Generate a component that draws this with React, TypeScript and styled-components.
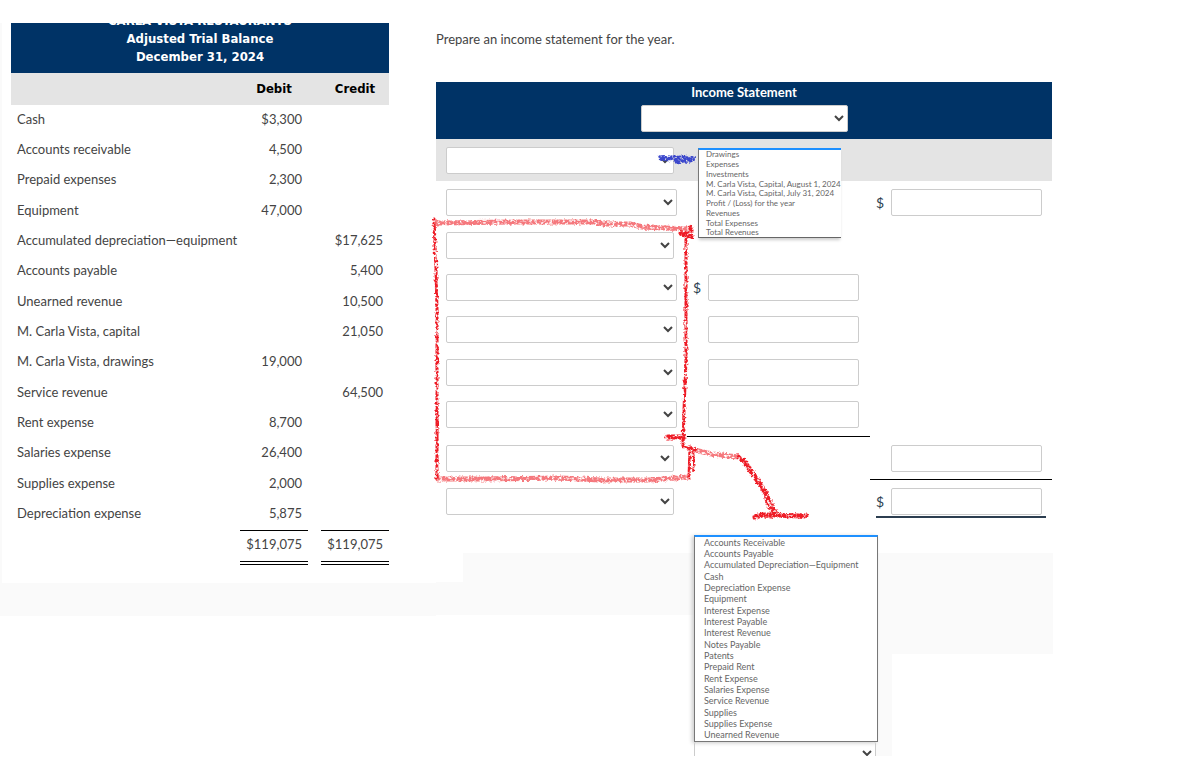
import React from 'react';
import styled, { createGlobalStyle } from 'styled-components';

const GlobalStyle = createGlobalStyle`
  *, *::before, *::after { box-sizing: border-box; }
  body {
    margin: 0;
    background: #fff;
    color: #444;
    font: 13px/18px Lato, "Liberation Sans", sans-serif;
  }
`;

const navy = '#003366';
const band = '#e4e4e4';
const wash = '#fafafa';

const Page = styled.main`
  display: flex;
  align-items: flex-start;
  padding: 23px 124px 10px 0;
`;

/* ---- Trial balance ---- */

const BalancePanel = styled.section`
  flex: 0 0 436px;
  padding: 0 0 33px 2px;
  background: ${wash};
`;

const BalanceSheet = styled.div`
  padding: 0 47px 18px 9px;
  background: #fff;
`;

const BalanceTitle = styled.header`
  display: flex;
  flex-direction: column;
  justify-content: flex-end;
  height: 50px;
  overflow: hidden;
  padding-bottom: 7px;
  background: ${navy};
  color: #fff;
  font: bold 13px/18px "DejaVu Sans Condensed", "Noto Sans", sans-serif;
  text-align: center;
`;

const BalanceTable = styled.table`
  width: 100%;
  border-collapse: collapse;
  table-layout: fixed;

  th {
    height: 32px;
    padding: 0;
    background: ${band};
    color: #000;
    font: bold 13px/18px "DejaVu Sans Condensed", "Noto Sans", sans-serif;
  }
  td {
    height: 30px;
    padding: 0 6px 4px;
    white-space: nowrap;
  }
  tr:nth-child(3n + 1) td { height: 31px; }
  tr:last-child td { height: 33px; }
`;

const Col = styled.col<{ $w?: number }>`
  width: ${(p) => (p.$w ? `${p.$w}px` : 'auto')};
`;

const Figure = styled.td<{ $total?: boolean }>`
  text-align: right;
  ${(p) => p.$total && 'border-top: 1px solid #000; border-bottom: 4px double #000;'}
`;

/* ---- Income statement ---- */

const StatementPanel = styled.section`
  position: relative;
  flex: 1;
  min-width: 617px;
`;

const Prompt = styled.p`
  margin: 0;
  padding: 7px 0 34px;
`;

const StatementTable = styled.table`
  width: 100%;
  padding-right: 1px;
  border-spacing: 0;
  table-layout: fixed;
`;

const StatementHead = styled.th`
  height: 57px;
  padding: 1px 0 7px;
  background: ${navy};
  color: #fff;
  font-weight: bold;
  vertical-align: top;
`;

const HeadStack = styled.div`
  display: flex;
  flex-direction: column;
  align-items: center;
  gap: 4px;
`;

const Select = styled.select<{ $w: number }>`
  display: block;
  width: ${(p) => p.$w}px;
  height: 27px;
  border: 1px solid #ccc;
  border-radius: 2px;
  background-color: #fff;
  color: #444;
  font: inherit;
`;

const StatementBody = styled.tbody`
  td {
    height: 42px;
    padding: 8px 10px 0;
    vertical-align: top;
  }
  td:nth-child(2) { padding-right: 11px; }
  tr:nth-child(3n + 2) td { height: 43px; }
  tr:nth-child(7) td { height: 44px; }
  tr:first-child td { background: ${band}; }
`;

const Cell = styled.td<{ $ruled?: boolean }>`
  ${(p) => p.$ruled && 'border-bottom: 1px solid #000;'}
`;

const Amount = styled.label<{ $final?: boolean }>`
  display: flex;
  align-items: center;
  justify-content: flex-end;
  gap: 7px;
  color: #2c3e50;
  font-size: 14px;
  ${(p) => p.$final && `
    margin: 0 -4px;
    padding: 0 4px 1px;
    border-bottom: 2px solid #2c3e50;
  `}
`;

const AmountInput = styled.input`
  width: 151px;
  height: 27px;
  padding: 0 6px;
  border: 1px solid #ccc;
  border-radius: 2px;
  background: #fff;
  font: inherit;
`;

const Spacer = styled.div`
  height: 31px;
`;

/* ---- Open option lists ---- */

const HeadingOptions = styled.ul`
  position: absolute;
  top: 125px;
  left: 262px;
  width: 143px;
  margin: 0;
  padding: 0 0 0 7px;
  list-style: none;
  background: #fff;
  border-top: 2px solid #1e90ff;
  border-left: 1px solid #777;
  border-bottom: 1px solid #666;
  box-shadow: 0 3px 3px -1px #ccc;
  color: #666;
  font-size: 8px;
  line-height: 10px;
  white-space: nowrap;

  li:nth-child(4n + 1) { line-height: 9px; }
`;

const Footer = styled.div`
  display: flex;
  align-items: flex-start;
`;

const FooterLeft = styled.div`
  flex: 0 0 258px;
  height: 62px;
  background: ${wash};

  &::before {
    content: '';
    display: block;
    width: 27px;
    height: 29px;
    background: #fff;
  }
`;

const FooterRight = styled.div`
  flex: 1;
  height: 101px;
  background: ${wash};
`;

const OptionsColumn = styled.div`
  flex: 0 0 198px;
  padding-right: 14px;
  background: ${wash};
`;

const AccountOptions = styled.ul`
  position: relative;
  margin: -18px 0 0;
  padding: 0 0 0 9px;
  list-style: none;
  background: #fff;
  border: 1px solid #777;
  border-top: 2px solid #1e90ff;
  box-shadow: -2px 1px 4px #ccc;
  color: #666;
  font-size: 9px;
  line-height: 11px;

  li:nth-child(3n) { line-height: 12px; }
`;

const ClippedField = styled.div`
  height: 14px;
  margin-right: 2px;
  overflow: hidden;

  select {
    width: 100%;
    height: 22px;
    font-size: 10px;
    border-top: 0;
  }
`;

const Markup = styled.svg`
  position: absolute;
  top: 0;
  left: -10px;
  width: 400px;
  height: 510px;
  overflow: visible;
  pointer-events: none;
`;

type Entry = [string, string, string];

const entries: Entry[] = [
  ['Cash', '$3,300', ''],
  ['Accounts receivable', '4,500', ''],
  ['Prepaid expenses', '2,300', ''],
  ['Equipment', '47,000', ''],
  ['Accumulated depreciation—equipment', '', '$17,625'],
  ['Accounts payable', '', '5,400'],
  ['Unearned revenue', '', '10,500'],
  ['M. Carla Vista, capital', '', '21,050'],
  ['M. Carla Vista, drawings', '19,000', ''],
  ['Service revenue', '', '64,500'],
  ['Rent expense', '8,700', ''],
  ['Salaries expense', '26,400', ''],
  ['Supplies expense', '2,000', ''],
  ['Depreciation expense', '5,875', ''],
];

type Line = {
  wide?: boolean;
  inner?: string;
  outer?: string;
  innerRule?: boolean;
  outerRule?: boolean;
  final?: boolean;
};

const lines: Line[] = [
  {},
  { wide: true, outer: '$' },
  {},
  { wide: true, inner: '$' },
  { wide: true, inner: '' },
  { wide: true, inner: '' },
  { wide: true, inner: '', innerRule: true },
  { outer: '', outerRule: true },
  { outer: '$', final: true },
];

const headings = [
  'Drawings', 'Expenses', 'Investments',
  'M. Carla Vista, Capital, August 1, 2024', 'M. Carla Vista, Capital, July 31, 2024',
  'Profit / (Loss) for the year', 'Revenues', 'Total Expenses', 'Total Revenues',
];

const accounts = [
  'Accounts Receivable', 'Accounts Payable', 'Accumulated Depreciation—Equipment', 'Cash',
  'Depreciation Expense', 'Equipment', 'Interest Expense', 'Interest Payable',
  'Interest Revenue', 'Notes Payable', 'Patents', 'Prepaid Rent', 'Rent Expense',
  'Salaries Expense', 'Service Revenue', 'Supplies', 'Supplies Expense', 'Unearned Revenue',
];

function Balance() {
  return (
    <BalancePanel>
      <BalanceSheet>
        <BalanceTitle>
          <div>CARLA VISTA RESTAURANTS</div>
          <div>Adjusted Trial Balance</div>
          <div>December 31, 2024</div>
        </BalanceTitle>
        <BalanceTable>
          <colgroup>
            <Col /><Col $w={68} /><Col $w={13} /><Col $w={68} />
          </colgroup>
          <thead>
            <tr><th /><th>Debit</th><th /><th>Credit</th></tr>
          </thead>
          <tbody>
            {entries.map(([name, debit, credit]) => (
              <tr key={name}>
                <td>{name}</td>
                <Figure>{debit}</Figure>
                <td />
                <Figure>{credit}</Figure>
              </tr>
            ))}
            <tr>
              <td />
              <Figure $total>$119,075</Figure>
              <td />
              <Figure $total>$119,075</Figure>
            </tr>
          </tbody>
        </BalanceTable>
      </BalanceSheet>
    </BalancePanel>
  );
}

function AmountField({ sign, name, final }: { sign?: string; name: string; final?: boolean }) {
  if (sign === undefined) return null;
  return (
    <Amount $final={final}>
      {sign}
      <AmountInput aria-label={name} />
    </Amount>
  );
}

function Annotations() {
  return (
    <Markup viewBox="426 23 400 510" aria-hidden="true">
      <defs>
        <filter id="crayon" filterUnits="userSpaceOnUse" x="420" y="140" width="410" height="390">
          <feTurbulence type="fractalNoise" baseFrequency="0.4" numOctaves="2" seed="4" result="n" />
          <feDisplacementMap in="SourceGraphic" in2="n" scale="4" xChannelSelector="R" yChannelSelector="G" result="rough" />
          <feColorMatrix in="n" type="matrix" values="0 0 0 0 0  0 0 0 0 0  0 0 0 0 0  0 0 4 0 -1" result="grain" />
          <feComposite in="rough" in2="grain" operator="in" />
        </filter>
      </defs>
      <g filter="url(#crayon)" fill="none" stroke="#ee1c25" strokeLinecap="round" strokeLinejoin="round">
        <g strokeWidth="5" opacity="0.6">
          <path d="M438 223 L520 222 L595 222 L604 224 L630 224 L642 227 L688 229" />
          <path d="M438 479 L480 479 L560 478 L600 480 L650 480 L688 477" />
          <path d="M694 450 L712 454 L738 457" />
        </g>
        <g strokeWidth="3">
          <path d="M434 219 L435 245 L436 270 L437 310 L437 400 L437 478" />
          <path d="M686 236 L686 360 L684 410 L683 446" />
          <path d="M690 447 L689 478" />
          <path d="M691 446 Q696 458 693 471" strokeWidth="2" />
          <path d="M684 447 L696 450 M738 456 L745 462" />
        </g>
        <g strokeWidth="5">
          <path d="M681 233 L691 235 M691 228 L691 236" />
          <path d="M667 437 L684 437" />
          <path d="M743 460 L753 474 L766 493" />
          <path d="M755 517 L762 515 L806 516" />
        </g>
        <g strokeWidth="3">
          <path d="M765 492 L767 504 L776 516 M766 492 L777 514" />
        </g>
      </g>
      <g filter="url(#crayon)" fill="none" stroke="#3a46cc" strokeLinecap="round">
        <path d="M661 158 L692 159" strokeWidth="6" />
        <path d="M676 161 L690 160" strokeWidth="5" />
      </g>
    </Markup>
  );
}

function Statement() {
  return (
    <StatementPanel>
      <Prompt>Prepare an income statement for the year.</Prompt>
      <StatementTable>
        <colgroup>
          <Col $w={251} /><Col $w={183} /><Col />
        </colgroup>
        <thead>
          <tr>
            <StatementHead colSpan={3}>
              <HeadStack>
                Income Statement
                <Select $w={207} aria-label="Statement period"><option /></Select>
              </HeadStack>
            </StatementHead>
          </tr>
        </thead>
        <StatementBody>
          {lines.map((line, i) => (
            <tr key={i}>
              <Cell>
                <Select $w={line.wide ? 231 : 228} aria-label={`Line ${i + 1} item`}><option /></Select>
              </Cell>
              <Cell $ruled={line.innerRule}>
                <AmountField sign={line.inner} name={`Line ${i + 1} amount`} />
              </Cell>
              <Cell $ruled={line.outerRule}>
                <AmountField sign={line.outer} name={`Line ${i + 1} total`} final={line.final} />
              </Cell>
            </tr>
          ))}
        </StatementBody>
      </StatementTable>
      <HeadingOptions>
        {headings.map((text) => <li key={text}>{text}</li>)}
      </HeadingOptions>
      <Spacer />
      <Footer>
        <FooterLeft />
        <OptionsColumn>
          <AccountOptions>
            {accounts.map((text) => <li key={text}>{text}</li>)}
          </AccountOptions>
          <ClippedField>
            <Select $w={181} aria-label="Account"><option /></Select>
          </ClippedField>
        </OptionsColumn>
        <FooterRight />
      </Footer>
      <Annotations />
    </StatementPanel>
  );
}

export default function App() {
  return (
    <>
      <GlobalStyle />
      <Page>
        <Balance />
        <Statement />
      </Page>
    </>
  );
}
